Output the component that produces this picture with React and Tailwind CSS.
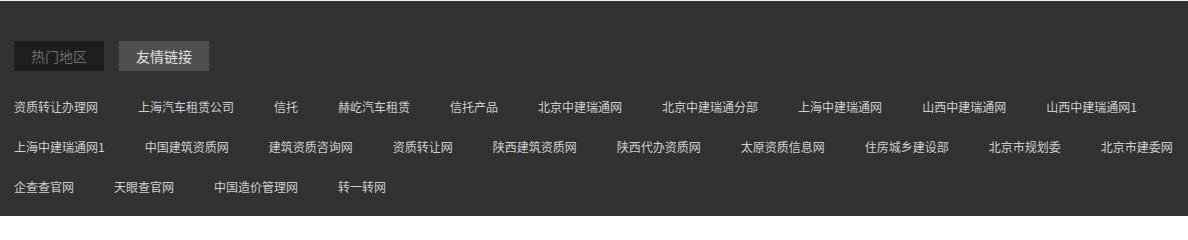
const links = [
  '资质转让办理网', '上海汽车租赁公司', '信托', '赫屹汽车租赁', '信托产品', '北京中建瑞通网',
  '北京中建瑞通分部', '上海中建瑞通网', '山西中建瑞通网', '山西中建瑞通网1', '上海中建瑞通网1',
  '中国建筑资质网', '建筑资质咨询网', '资质转让网', '陕西建筑资质网', '陕西代办资质网',
  '太原资质信息网', '住房城乡建设部', '北京市规划委', '北京市建委网', '企查查官网', '天眼查官网',
  '中国造价管理网', '转一转网',
];

export default function App() {
  return (
    <div
      className="h-[216px] w-[1188px] border-t border-[#f0f0f0] bg-[#323232] pl-[14px] pr-2 pt-[40px]"
      style={{ fontFamily: '"Noto Sans CJK SC", "Noto Sans", sans-serif' }}
    >
      <div className="flex gap-[15px]">
        <button className="h-[30px] w-[90px] bg-[#1e1e1e] text-[14px] text-[#6c6c6c]">热门地区</button>
        <button className="h-[30px] w-[90px] bg-[#4f4f4f] text-[14px] text-[#e0e0e0]">友情链接</button>
      </div>
      <ul className="mt-4 flex flex-wrap gap-x-[40px] text-[12px] leading-[40px] text-[#cfcfcf]">
        {links.map((l) => (
          <li key={l}>
            <a href="#" className="hover:text-white">{l}</a>
          </li>
        ))}
      </ul>
    </div>
  );
}
